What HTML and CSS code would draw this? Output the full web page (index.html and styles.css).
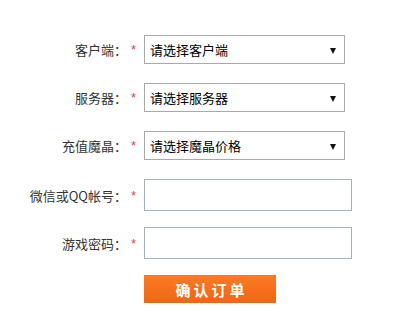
FILE: index.html
```html
<!DOCTYPE html>
<html lang="zh-CN">
<head>
    <meta charset="UTF-8">
    <meta name="viewport" content="width=device-width, initial-scale=1.0">
    <title>确认订单</title>
    <link rel="stylesheet" href="styles.css">
</head>
<body>

    <!-- Order form -->
    <form class="order-form">
        <div class="row">
            <label class="row-label">客户端：</label>
            <span class="req">*</span>
            <div class="select-box">
                <span>请选择客户端</span>
                <i class="arrow"></i>
            </div>
        </div>
        <div class="row">
            <label class="row-label">服务器：</label>
            <span class="req">*</span>
            <div class="select-box">
                <span>请选择服务器</span>
                <i class="arrow"></i>
            </div>
        </div>
        <div class="row">
            <label class="row-label">充值魔晶：</label>
            <span class="req">*</span>
            <div class="select-box">
                <span>请选择魔晶价格</span>
                <i class="arrow"></i>
            </div>
        </div>
        <div class="row row-text">
            <label class="row-label">微信或QQ帐号：</label>
            <span class="req">*</span>
            <input type="text" class="text-box">
        </div>
        <div class="row row-text">
            <label class="row-label">游戏密码：</label>
            <span class="req">*</span>
            <input type="password" class="text-box">
        </div>
        <div class="row">
            <span class="row-label"></span>
            <span class="req"></span>
            <button type="button" class="btn-submit">确认订单</button>
        </div>
    </form>

</body>
</html>
```

FILE: styles.css
```css
body {
    margin: 0;
    padding: 0;
    background-color: #fff;
    font-family: "Noto Sans CJK SC", "Liberation Sans", sans-serif;
    font-size: 13px;
    color: #333;
}
.order-form {
    padding-top: 25px;
}
.row {
    display: flex;
    align-items: center;
    height: 48px;
}
.row-text {
    padding-top: 4px;
    height: 44px;
}
.row-label {
    width: 127px;
    text-align: right;
    color: #333;
}
.req {
    width: 17px;
    padding-left: 4px;
    box-sizing: border-box;
    color: #e8434b;
    font-family: "Liberation Sans", sans-serif;
    font-size: 13px;
}
.select-box {
    position: relative;
    width: 201px;
    height: 29px;
    border: 1px solid #a9a9a9;
    box-sizing: border-box;
    padding-left: 5px;
    display: flex;
    align-items: center;
    color: #000;
}
.arrow {
    position: absolute;
    right: 8px;
    top: 12px;
    width: 0;
    height: 0;
    border-left: 3px solid transparent;
    border-right: 3px solid transparent;
    border-top: 6px solid #111;
}
.text-box {
    width: 208px;
    height: 32px;
    margin: 0;
    padding: 0 5px;
    border: 1px solid #a7b1ba;
    box-sizing: border-box;
    outline: none;
}
.btn-submit {
    width: 132px;
    height: 28px;
    padding: 0;
    border: none;
    background: linear-gradient(#fb7a26, #f26610);
    color: #fff;
    font-family: "Noto Sans CJK SC", sans-serif;
    font-size: 15px;
    font-weight: bold;
    letter-spacing: 3px;
    text-indent: 3px;
    cursor: pointer;
}
```
